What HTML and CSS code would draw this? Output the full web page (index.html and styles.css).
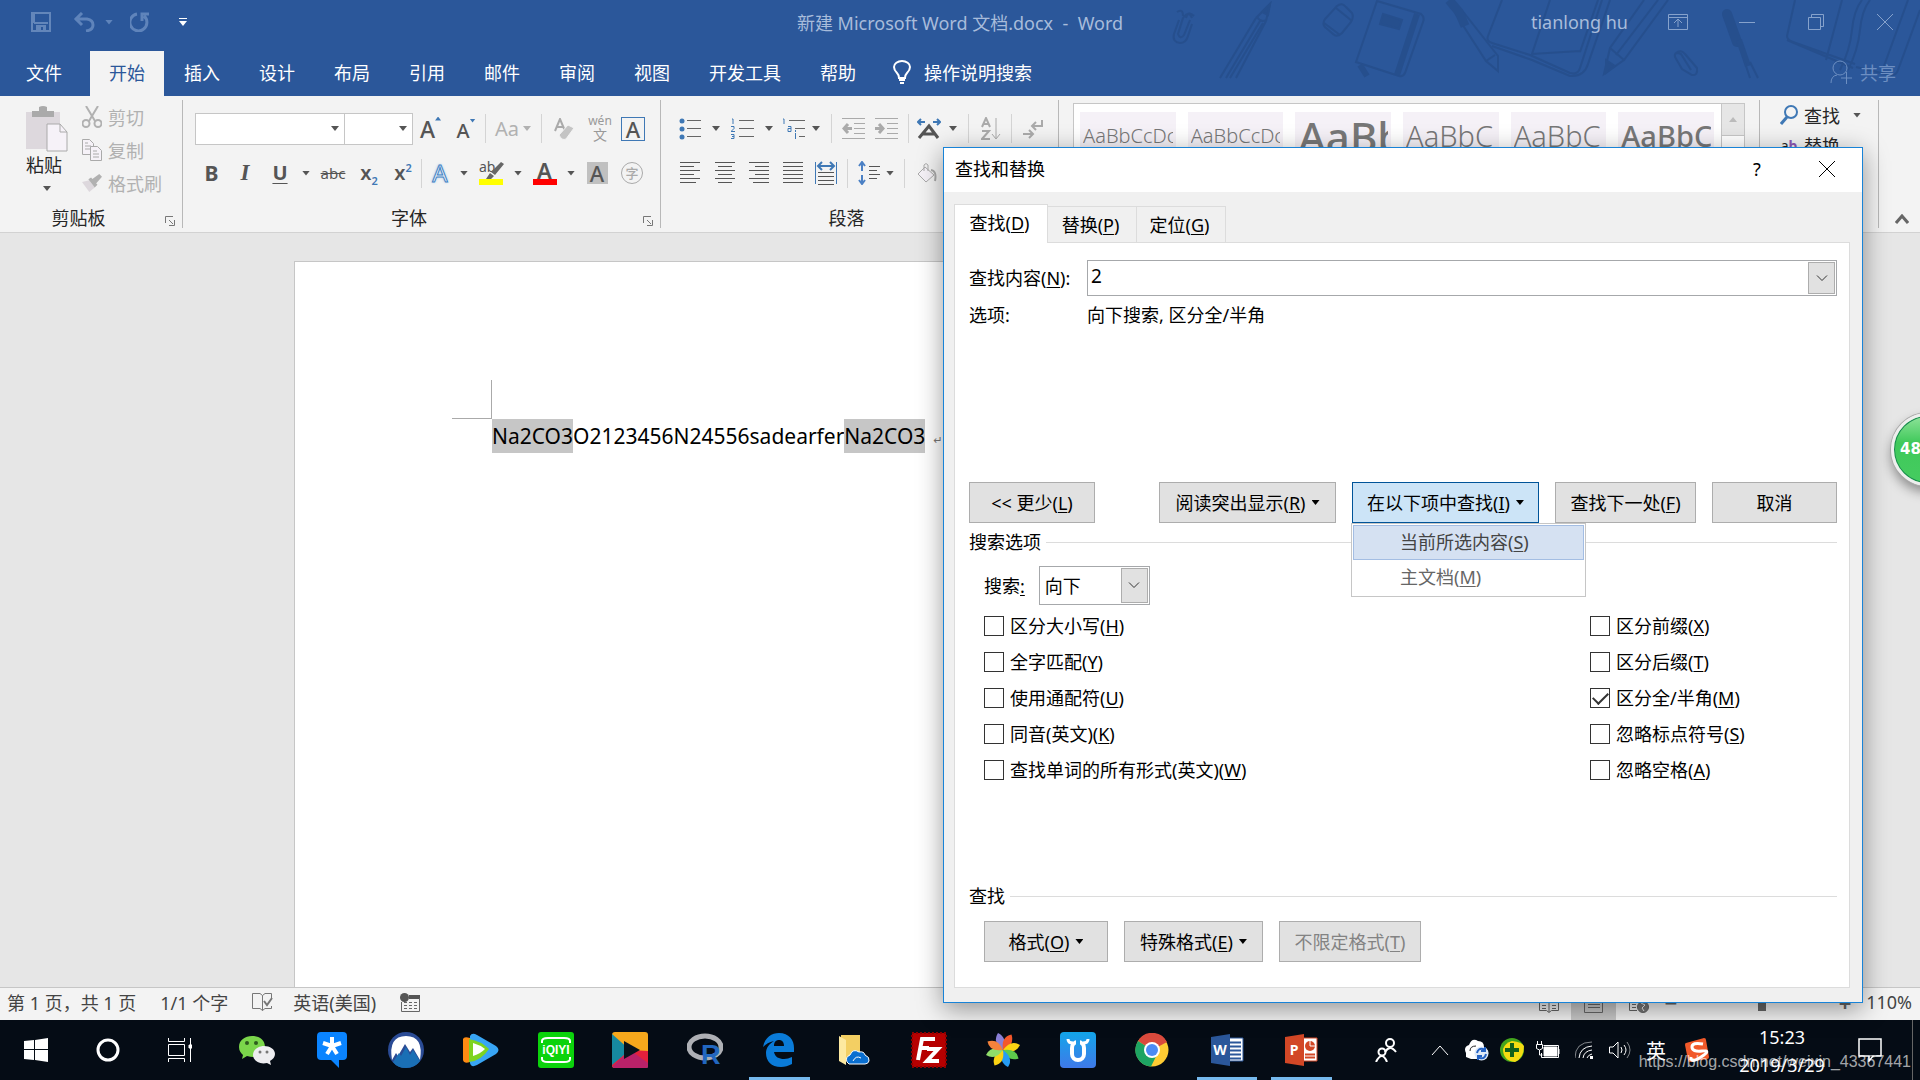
FILE: index.html
```html
<!DOCTYPE html>
<html lang="zh-CN">
<head>
    <meta charset="UTF-8">
    <meta name="viewport" content="width=device-width, initial-scale=1.0">
    <title>新建 Microsoft Word 文档.docx - Word</title>
    <link rel="stylesheet" href="styles.css">
</head>
<body>
    <header class="header">
        <svg class="doodles" width="760" height="96" viewBox="0 0 760 96" fill="none" stroke="#234a86" stroke-width="2">
            <path d="M17 12q6-4 6 4M34 16q-6-6-8 2M19 20l-5 14q-2 8 6 9 6 0 8-7l4-12M30 20l-6 15q-4 5-6-1l5-16q6-8 9 0"/>
            <path d="M60 78l36-60M66 78l34-57M70 78l33-55M76 78l30-57M96 18l14-14-4 17M97 17q4 6 9 3"/>
            <path d="M102 12l8-8-2 11z" fill="#234a86"/>
            <path d="M177 6q5-4 9 1l6 6q2 4-1 9l-9 11q-5 5-9 1l-8-7q-3-3 0-8zM176 8l16 13M164 23l16 12"/>
            <path d="M217 1l44 13q4 3 2 8l-18 51q-2 4-6 3l-43-14z"/>
            <path d="M257 14l-20 61M200 65l7 11" stroke-width="6"/>
            <path d="M223 14l19 6-3 9-19-5z" fill="#234a86"/>
            <path d="M301 9l37 47 0 15-12-10-31-48M326 61l9-6"/>
            <path d="M289 0l10 12 6 14" stroke-width="9"/>
            <path d="M342 0l-14 36q-2 5 4 7l38 12 40 18q8 2 10-5l22-68M332 46l40 14 38 16q14 1 18-12l22-64M390 0l-18 54 48-3M438 0l-18 52"/>
            <path d="M484 0l-34 48-6 26 20-14 44-60M450 48l14 12M498 0l-42 55"/>
            <path d="M446 60l0 13 9-7z" fill="#234a86"/>
            <path d="M516 53q5-4 9 1l12 14q1 8-5 7l-10-6-7-12q-1-6 6-3l10 16"/>
            <path d="M567 14l10 28" stroke-width="10" stroke-linecap="round"/>
            <path d="M579 40l9 26" stroke-width="6"/>
            <path d="M584 60l6 18M590 62l8 16"/>
            <path d="M635 0l-8 36q0 4 6 6l62 22M627 40l66 28M682 0l-16 60M710 0q-8 10-10 30t-12 40M702 0q-8 10-10 30t-12 40M760 10l-22 60q-2 6-8 5l-34-8M748 0l-24 66"/>
        </svg>
        <div class="titlebar">
            <div class="quick-access">
                <button class="icon-btn" aria-label="保存"><svg width="20" height="20" viewBox="0 0 20 20" fill="none" stroke="#6386ba" stroke-width="2"><path d="M1 1h18v18H1zM3 11h14M3 1v10"/><path d="M5 13h10v6h-3v-4h-2v4H5z" fill="#6386ba" stroke="none"/></svg></button>
                <button class="icon-btn undo" aria-label="撤消"><svg width="22" height="20" viewBox="0 0 22 20" fill="none" stroke="#5f84bb" stroke-width="3"><path d="M2 7h12q6 1 6 6t-7 6M9 1L3 7l6 6"/></svg></button>
                <i class="caret dim"></i>
                <button class="icon-btn redo" aria-label="重复"><svg width="20" height="20" viewBox="0 0 20 20" fill="none" stroke="#5f84bb" stroke-width="3"><path d="M7 2A8.500 8.500 0 1 0 14 4M12 9V2h7"/></svg></button>
                <button class="icon-btn customize" aria-label="自定义快速访问工具栏"><svg width="8" height="8" viewBox="0 0 8 8" fill="#fff"><path d="M0 0h8v1H0zM0 3h8L4 8z"/></svg></button>
            </div>
            <div class="window-title">新建 Microsoft Word 文档.docx&nbsp; -&nbsp; Word</div>
            <div class="window-controls">
                <span class="user-name">tianlong hu</span>
                <button class="win-btn" aria-label="功能区显示选项"><svg width="20" height="16" viewBox="0 0 20 16" fill="none" stroke="#86a2cc"><path d="M.5.5h19v15H.5zM.5 3.500h19M10 13V6M6 9l4-4 4 4"/></svg></button>
                <button class="win-btn" aria-label="最小化"><svg width="16" height="16" viewBox="0 0 16 16" stroke="#86a2cc"><path d="M0 8.500h16"/></svg></button>
                <button class="win-btn" aria-label="还原"><svg width="16" height="16" viewBox="0 0 16 16" fill="none" stroke="#86a2cc"><path d="M.5 3.500h12v12H.5zM3.500 3V.5h12v12H13"/></svg></button>
                <button class="win-btn" aria-label="关闭"><svg width="16" height="16" viewBox="0 0 16 16" stroke="#86a2cc"><path d="M0 0l16 16M16 0L0 16"/></svg></button>
            </div>
        </div>
        <nav class="tabs">
            <a href="#" class="tab file">文件</a>
            <a href="#" class="tab active">开始</a>
            <a href="#" class="tab">插入</a>
            <a href="#" class="tab">设计</a>
            <a href="#" class="tab">布局</a>
            <a href="#" class="tab">引用</a>
            <a href="#" class="tab">邮件</a>
            <a href="#" class="tab">审阅</a>
            <a href="#" class="tab">视图</a>
            <a href="#" class="tab">开发工具</a>
            <a href="#" class="tab">帮助</a>
            <a href="#" class="tab tell-me"><svg width="18" height="24" viewBox="0 0 18 24" fill="none" stroke="#fff" stroke-width="2"><path d="M6 18q0-3-2-5-3-3-3-6a8 6 0 0 1 16 0q0 3-3 6-2 2-2 5zM6 20h6M7 23h4"/></svg>操作说明搜索</a>
            <a href="#" class="tab share"><svg width="22" height="24" viewBox="0 0 22 24" fill="none" stroke="#6d8fc2" stroke-width="1"><ellipse cx="10" cy="8" rx="7" ry="7"/><path d="M1 23q0-7 6-8M11 18h11M16.500 12v12"/></svg>共享</a>
        </nav>
    </header>

    <section class="ribbon">
        <div class="group clipboard">
            <div class="group-body">
                <button class="paste"><svg width="42" height="46" viewBox="0 0 42 46"><path d="M0 6h34v37H0z" fill="#ddd8dd"/><path d="M6 5h7V1q4-2 8 0v4h7v6H6z" fill="#aaa"/><path d="M21 18h13l7 8v19H21z" fill="#f6f2f8" stroke="#aaa"/><path d="M34 18v8h7" fill="none" stroke="#aaa"/></svg><span>粘贴</span><i class="caret"></i></button>
                <div class="clip-actions">
                    <button><svg width="20" height="22" viewBox="0 0 20 22" fill="none" stroke="#b1b1b1" stroke-width="2"><path d="M4 0l9 15M16 0L7 15"/><circle cx="4" cy="17.500" r="3.500"/><circle cx="16" cy="17.500" r="3.500"/></svg>剪切</button>
                    <button><svg width="20" height="22" viewBox="0 0 20 22" fill="#f6f2f8" stroke="#aaa"><path d="M.5.5h7l4 4v11H.5zM3 4h3M3 7h6M3 10h6"/><path d="M8.500 7.500h7l4 4v10h-11zM11 12h4M11 15h6M11 18h6"/></svg>复制</button>
                    <button><svg width="22" height="20" viewBox="0 0 22 20"><path d="M0 9l8-2 6 8-6 5z" fill="#ddd8dd"/><path d="M7 6l3-2 7 8-3 3zM11 6l8-6 3 3-7 8z" fill="#b1b1b1"/></svg>格式刷</button>
                </div>
            </div>
            <div class="group-label"><span>剪贴板</span><svg width="10" height="10" viewBox="0 0 10 10" fill="none" stroke="#777"><path d="M.5 7V.5H8M4 4l4 4M9.500 4v5.500H4"/></svg></div>
        </div>

        <div class="group font">
            <div class="group-body">
                <div class="tool-row font-row-1">
                    <span class="combo"><input type="text" aria-label="字体"><i class="caret"></i></span>
                    <span class="combo second"><input type="text" aria-label="字号"><i class="caret"></i></span>
                    <button class="grow">A<i class="caret up"></i></button>
                    <button class="grow shrink">A<i class="caret"></i></button>
                    <i class="sep"></i>
                    <button class="case">Aa<i class="caret"></i></button>
                    <i class="sep"></i>
                    <button aria-label="清除格式"><svg width="20" height="22" viewBox="0 0 20 22" fill="none" stroke="#aaa" stroke-width="2"><path d="M1 13L6 1l5 12M3 9h6"/><path d="M5 17l9-10 6 3-8 11q-4 2-7-4z" fill="#c4c4c4" stroke="#f3f3f3" stroke-width="1"/></svg></button>
                    <button class="pinyin"><span>wén</span><span>文</span></button>
                    <button><span class="boxed">A</span></button>
                </div>
                <div class="tool-row font-row-2">
                    <button class="bold">B</button>
                    <button class="italic">I</button>
                    <button class="underline">U</button>
                    <i class="caret"></i>
                    <button class="strike">abc</button>
                    <button class="script">x<sub>2</sub></button>
                    <button class="script">x<sup>2</sup></button>
                    <i class="sep"></i>
                    <button class="effect">A</button>
                    <i class="caret"></i>
                    <button class="marker"><span>ab</span><svg width="20" height="20" viewBox="0 0 20 20" fill="#666"><path d="M17 1l3 2-9 11-4-3zM6 12l4 3-3 3H2z"/></svg></button>
                    <i class="caret"></i>
                    <button class="color">A</button>
                    <i class="caret"></i>
                    <button><span class="shaded">A</span></button>
                    <button><span class="circled">字</span></button>
                </div>
            </div>
            <div class="group-label"><span>字体</span><svg width="10" height="10" viewBox="0 0 10 10" fill="none" stroke="#777"><path d="M.5 7V.5H8M4 4l4 4M9.500 4v5.500H4"/></svg></div>
        </div>

        <div class="group paragraph">
            <div class="group-body">
                <div class="tool-row para-row-1">
                    <button aria-label="项目符号"><svg width="22" height="22" viewBox="0 0 22 22" stroke="#666"><path d="M8 2.500h14M8 10.500h14M8 18.500h14"/><g fill="#3f78b5" stroke="none"><circle cx="3" cy="3" r="2.500"/><circle cx="3" cy="11" r="2.500"/><circle cx="3" cy="19" r="2.500"/></g></svg></button>
                    <i class="caret"></i>
                    <button aria-label="编号"><svg width="23" height="22" viewBox="0 0 23 22" fill="none" stroke="#666"><path d="M8 2.500h15M8 10.500h15M8 18.500h15"/><path d="M1 1h1v5M0 8.500h3v2l-3 3h4M0 16.500h3v4H0M1 18.500h2" stroke="#3f78b5"/></svg></button>
                    <i class="caret"></i>
                    <button aria-label="多级列表"><svg width="24" height="22" viewBox="0 0 24 22" fill="none" stroke="#666"><path d="M7 2.500h16M13 10.500h10M17 18.500h6"/><path d="M1 1h1v5M6 8.500h3v5H6v-3h3M13.500 15v6M13.500 12v2" stroke="#3f78b5"/></svg></button>
                    <i class="caret"></i>
                    <i class="sep"></i>
                    <button aria-label="减少缩进量"><svg width="23" height="22" viewBox="0 0 23 22" fill="none" stroke="#aaa"><path d="M0 .5h23M12 5.500h11M12 10.500h11M12 15.500h11M0 20.500h23"/><path d="M10 10.500H2M6 6l-4 4.500L6 15" stroke-width="3"/></svg></button>
                    <button aria-label="增加缩进量"><svg width="23" height="22" viewBox="0 0 23 22" fill="none" stroke="#aaa"><path d="M0 .5h23M12 5.500h11M12 10.500h11M12 15.500h11M0 20.500h23"/><path d="M0 10.500h8M4 6l4 4.500L4 15" stroke-width="3"/></svg></button>
                    <i class="sep"></i>
                    <button aria-label="中文版式"><svg width="24" height="22" viewBox="0 0 24 22" fill="none" stroke="#3f78b5" stroke-width="2"><path d="M1 4h7M4 1L1 4l3 3M23 4h-7M20 1l3 3-3 3"/><path d="M2 20L12 8l9 12M6 16h12" stroke="#555" stroke-width="3"/></svg></button>
                    <i class="caret"></i>
                    <i class="sep"></i>
                    <button aria-label="排序"><svg width="20" height="24" viewBox="0 0 20 24" fill="none" stroke="#aaa" stroke-width="2"><path d="M1 10L5 1l4 9M2 7h6M1 14h7l-7 8h8"/><path d="M15 1v20M11 17l4 5 4-5" stroke-width="1"/></svg></button>
                    <i class="sep"></i>
                    <button aria-label="显示编辑标记"><svg width="20" height="20" viewBox="0 0 20 20" fill="none" stroke="#aaa" stroke-width="2"><path d="M19 1v6h-9M13 3L9 7l4 4M0 15h9M6 11l4 4-4 4"/></svg></button>
                </div>
                <div class="tool-row para-row-2">
                    <button aria-label="左对齐"><svg width="20" height="22" viewBox="0 0 20 22" stroke="#555"><path d="M0 .5h20M0 4.500h14M0 8.500h20M0 12.500h14M0 16.500h20M0 20.500h16"/></svg></button>
                    <button aria-label="居中"><svg width="20" height="22" viewBox="0 0 20 22" stroke="#555"><path d="M0 .5h20M3 4.500h14M0 8.500h20M3 12.500h14M0 16.500h20M3 20.500h14"/></svg></button>
                    <button aria-label="右对齐"><svg width="20" height="22" viewBox="0 0 20 22" stroke="#555"><path d="M0 .5h20M6 4.500h14M0 8.500h20M6 12.500h14M0 16.500h20M4 20.500h16"/></svg></button>
                    <button aria-label="两端对齐"><svg width="20" height="22" viewBox="0 0 20 22" stroke="#555"><path d="M0 .5h20M0 4.500h20M0 8.500h20M0 12.500h20M0 16.500h20M0 20.500h20"/></svg></button>
                    <button aria-label="分散对齐"><svg width="22" height="24" viewBox="0 0 22 24" fill="none" stroke="#555"><path d="M3 11.500h16M3 15.500h16M3 19.500h16M3 23.500h16"/><path d="M.5 1v22M21.500 1v22" stroke="#3f78b5"/><path d="M4 5h14M7 1L3 5l4 4M15 1l4 4-4 4" stroke="#3f78b5" stroke-width="2"/></svg></button>
                    <i class="sep"></i>
                    <button aria-label="行距"><svg width="22" height="24" viewBox="0 0 22 24" fill="none" stroke="#555"><path d="M11 5.500h11M11 9.500h8M11 13.500h11M11 17.500h8"/><path d="M4 2v8M1 5l3-4 3 4M4 14v8M1 19l3 4 3-4" stroke="#4b80c4" stroke-width="2"/></svg></button>
                    <i class="caret"></i>
                    <i class="sep"></i>
                    <button aria-label="底纹"><svg width="20" height="20" viewBox="0 0 20 20" fill="#f6f2f8" stroke="#aaa"><path d="M8 4l9 8-8 7-8-8z"/><path d="M7 8V2q2-3 4 0v6" fill="none"/><path d="M14 7q6 1 4 11" fill="none" stroke-width="2"/></svg></button>
                </div>
            </div>
            <div class="group-label"><span>段落</span><svg width="10" height="10" viewBox="0 0 10 10" fill="none" stroke="#777"><path d="M.5 7V.5H8M4 4l4 4M9.500 4v5.500H4"/></svg></div>
        </div>

        <div class="group styles">
            <div class="gallery">
                <button class="style-item small">AaBbCcDc</button>
                <button class="style-item small">AaBbCcDc</button>
                <button class="style-item title">AaBb</button>
                <button class="style-item">AaBbC</button>
                <button class="style-item">AaBbC</button>
                <button class="style-item strong">AaBbC</button>
                <div class="gallery-scroll"><button aria-label="上一行"><i class="caret up"></i></button></div>
            </div>
        </div>

        <div class="group editing">
            <button><svg width="18" height="20" viewBox="0 0 18 20" fill="none" stroke="#3f78b5" stroke-width="2"><ellipse cx="11" cy="7" rx="6" ry="6"/><path d="M7 12l-6 7" stroke-width="3"/></svg>查找<i class="caret"></i></button>
            <button><span class="ab">a<b>b</b></span>替换</button>
        </div>
        <button class="collapse" aria-label="折叠功能区"><svg width="14" height="10" viewBox="0 0 14 10" fill="none" stroke="#666" stroke-width="3"><path d="M1 9l6-7 6 7"/></svg></button>
    </section>

    <main class="workspace">
        <article class="page">
            <div class="margin-corner"></div>
            <p><mark>Na2CO3</mark>O2123456N24556sadearfer<mark>Na2CO3</mark><span class="pilcrow">↵</span></p>
        </article>
    </main>

    <footer class="statusbar">
        <span>第 1 页，共 1 页</span>
        <span>1/1 个字</span>
        <svg width="21" height="18" viewBox="0 0 21 18" fill="none" stroke="#777"><path d="M10.500 2.500L8 .5H.5v15H8l2.500 2 2.500-2h6.500V13M10.500 2.500v15M10.500 2.500l2.500-2h6.500v5"/><path d="M12 8l3 4 5-7" stroke-width="2"/></svg>
        <span>英语(美国)</span>
        <svg class="macro" width="20" height="19" viewBox="0 0 20 19"><path d="M9 2h11v4H9z" fill="#555"/><path d="M1.500 9v9.500h18V5" fill="none" stroke="#666"/><path d="M4 9.500h13M4 12.500h13M4 15.500h13" stroke="#666" stroke-dasharray="3 2"/><circle cx="4.500" cy="4.500" r="4.500" fill="#555"/></svg>
        <div class="view-tools">
            <button aria-label="阅读视图"><svg width="20" height="18" viewBox="0 0 20 18" fill="none" stroke="#666"><path d="M.5 2.500h7l2.500 2 2.500-2h7v13h-7l-2.500 2-2.500-2h-7zM10 4v13M3 7.500h4M3 10.500h4M3 13.500h4M13 7.500h4M13 10.500h4M13 13.500h4"/></svg></button>
            <button class="on" aria-label="页面视图"><svg width="19" height="18" viewBox="0 0 19 18" fill="none" stroke="#666"><path d="M.5.5h18v17H.5zM4 6.500h12M4 9.500h12M4 12.500h12"/></svg></button>
            <button aria-label="Web 版式视图"><svg width="20" height="20" viewBox="0 0 20 20" fill="none" stroke="#666"><path d="M8 16.500H.5v-14h16V6M3 7.500h7M3 10.500h4M3 13.500h4"/><circle cx="14" cy="13" r="5.500" fill="#777"/><path d="M12 9l4 2-3 3 2 3" stroke="#f3f3f3"/></svg></button>
            <span class="zoom-sign">−</span>
            <input class="zoom-range" type="range" min="10" max="200" value="110" aria-label="缩放">
            <span class="zoom-sign">+</span>
            <span class="zoom-value">110%</span>
        </div>
    </footer>

    <nav class="taskbar">
        <div class="system">
            <a href="#" aria-label="开始"><svg width="24" height="24" viewBox="0 0 24 24" fill="#fff"><path d="M0 3l10-1v9H0zM11 2l13-2v11H11zM0 12h10v10L0 21zM11 12h13v12l-13-2z"/></svg></a>
            <a href="#" aria-label="Cortana"><svg width="24" height="24" viewBox="0 0 24 24" fill="none" stroke="#fff" stroke-width="3"><circle cx="12" cy="12" r="10"/></svg></a>
            <a href="#" aria-label="任务视图"><svg width="24" height="24" viewBox="0 0 24 24" fill="none" stroke="#fff" stroke-width="1"><path d="M.5 0v3.500h16V0M.5 24v-3.500h16V24M.5 6.500h16v11H.5zM22.500 0v24"/><path d="M21 7h3v3h-3z" fill="#fff"/></svg></a>
        </div>
        <div class="apps">
            <a href="#" aria-label="微信"><svg width="36" height="36" viewBox="0 0 36 36"><path d="M13 4c-7 0-13 4-13 11 0 4 2 6 4 8l-1 4 5-3c11 3 18-2 18-9S20 4 13 4z" fill="#7bd64b"/><path d="M25 14c-6 0-11 4-11 9s6 10 14 8l4 2-1-4c3-2 5-4 5-7 0-5-5-8-11-8z" fill="#ededf0"/><g fill="#2d5c1e"><circle cx="8" cy="11" r="2"/><circle cx="17" cy="11" r="2"/></g><g fill="#777"><circle cx="21" cy="20" r="1.500"/><circle cx="28" cy="20" r="1.500"/></g></svg></a>
            <a href="#" aria-label="滴答"><svg width="30" height="36" viewBox="0 0 30 36"><path d="M4 0h22q4 0 4 4v20q0 4-4 4h-4v8l-8-8H4q-4 0-4-4V4q0-4 4-4z" fill="#0a84ff"/><path d="M15 14V5M15 14l-9-3M15 14l9-3M15 14l-5 8M15 14l5 8" stroke="#fff" stroke-width="4"/></svg></a>
            <a href="#" aria-label="NordVPN"><svg width="36" height="36" viewBox="0 0 36 36"><circle cx="18" cy="18" r="18" fill="#2a4b95"/><path d="M4 28Q0 4 18 4t14 24l-7-12-3 4-5-8-7 12-2-3z" fill="#fff"/><path d="M5 30l6-9 2 3 5-9 4 8 3-5 7 11q-5 7-14 7T5 30z" fill="#1a6fb5"/></svg></a>
            <a href="#" aria-label="腾讯视频"><svg width="36" height="36" viewBox="0 0 36 36"><path d="M7 4q2-4 7-1l19 11q5 4 0 8L14 33q-6 3-7-2z" fill="#38a5f4"/><path d="M0 7q1-3 7-1v24q-6 2-7-2z" fill="#ff8b12"/><path d="M6 7q12 2 20 10-8 12-20 13z" fill="#7ed321"/><path d="M10 11q7 2 12 6-5 5-12 7z" fill="#fff"/></svg></a>
            <a href="#" aria-label="爱奇艺"><svg width="36" height="36" viewBox="0 0 36 36"><rect width="36" height="36" rx="3" fill="#0bd30b"/><path d="M4 11V9q0-3 6-3h16q6 0 6 3v2M4 25v2q0 3 6 3h16q6 0 6-3v-2" fill="none" stroke="#fff" stroke-width="2"/><text x="18" y="22" text-anchor="middle" class="logo-iqiyi">iQIYI</text></svg></a>
            <a href="#" aria-label="视频播放器"><svg width="36" height="36" viewBox="0 0 36 36"><rect width="36" height="36" rx="3" fill="#f6a81c"/><path d="M0 2v32l18-16z" fill="#1689a0"/><path d="M0 33q0 3 3 3h30q3 0 3-3V19L18 18z" fill="#e3203c"/><path d="M0 35l18-17 18 13v5H2z" fill="#a7247c" opacity=".7"/><path d="M12 9l16 9-16 9z" fill="#07131c"/></svg></a>
            <a href="#" aria-label="R"><svg width="36" height="34" viewBox="0 0 36 34"><ellipse cx="18" cy="14" rx="16" ry="11" fill="none" stroke="#aeb0b5" stroke-width="5"/><text x="14" y="31" class="logo-r">R</text></svg></a>
            <a href="#" class="running" aria-label="Edge"><svg width="32" height="34" viewBox="0 0 32 34"><path d="M0 14C2 4 9 0 16 0c10 0 15 7 15 15v4H11c1 5 5 7 10 7 3 0 5-1 8-2v7c-4 2-7 3-11 3C8 34 3 28 3 20c0-5 3-9 8-12-5 1-8 3-11 6zm11-1h10c0-4-2-6-5-6s-5 2-5 6z" fill="#0a7bd8"/></svg></a>
            <a href="#" aria-label="OneDrive"><svg width="32" height="34" viewBox="0 0 32 34"><path d="M3 2h19v25H3z" fill="#f3cf63"/><path d="M1 3l7 4v25l-7-4z" fill="#fde9a0"/><path d="M9 29q-2-5 3-7 3-7 9-3 5-1 6 3 5 2 4 6-1 3-4 3H11z" fill="#0a6fd0" stroke="#fff"/><path d="M15 28q3-6 8-3" stroke="#fff" fill="none"/></svg></a>
            <a href="#" aria-label="FileZilla"><svg width="36" height="36" viewBox="0 0 36 36"><rect x="1" y="1" width="34" height="34" fill="#b60000" stroke="#8b0000" stroke-width="2" stroke-dasharray="2 2"/><path d="M7 28L11 7h13M9 16h9M16 17h11L16 29h12" fill="none" stroke="#fff" stroke-width="4"/></svg></a>
            <a href="#" aria-label="美图看看"><svg width="34" height="34" viewBox="0 0 34 34"><g transform="translate(17 17)"><path d="M0 0q-11-8-5-17 10 5 5 17z" fill="#8a7fd6"/><path d="M0 0q-11-8-5-17 10 5 5 17z" fill="#f4572b" transform="rotate(45)"/><path d="M0 0q-11-8-5-17 10 5 5 17z" fill="#fbd313" transform="rotate(90)"/><path d="M0 0q-11-8-5-17 10 5 5 17z" fill="#5dcb4c" transform="rotate(135)"/><path d="M0 0q-11-8-5-17 10 5 5 17z" fill="#269cf2" transform="rotate(180)"/><path d="M0 0q-11-8-5-17 10 5 5 17z" fill="#fbd313" transform="rotate(225)"/><path d="M0 0q-11-8-5-17 10 5 5 17z" fill="#8fdc6a" transform="rotate(270)"/><path d="M0 0q-11-8-5-17 10 5 5 17z" fill="#f4823b" transform="rotate(315)"/></g></svg></a>
            <a href="#" aria-label="U"><svg width="36" height="36" viewBox="0 0 36 36"><defs><linearGradient id="u-bg" x1="0" y1="0" x2="0" y2="1"><stop offset="0" stop-color="#13a6ea"/><stop offset="1" stop-color="#3f79e8"/></linearGradient></defs><rect width="36" height="36" rx="4" fill="url(#u-bg)"/><path d="M8 7q0 4 5 4M28 7q0 4-5 4" fill="none" stroke="#fff" stroke-width="3"/><rect x="12" y="10" width="12" height="18" rx="6" fill="none" stroke="#fff" stroke-width="4"/><path d="M16 7h4v7h-4z" fill="#1e9aea"/></svg></a>
            <a href="#" aria-label="Chrome"><svg width="34" height="34" viewBox="0 0 34 34"><circle cx="17" cy="17" r="16.500" fill="#fc3"/><path d="M17 17L3 8A16.500 16.500 0 0 1 32 9z" fill="#da4a3d"/><path d="M17 17L3 8a16.500 16.500 0 0 0 13 25.500l5-10z" fill="#1da462"/><circle cx="17" cy="17" r="8" fill="#fff"/><circle cx="17" cy="17" r="6" fill="#4c8bf5"/></svg></a>
            <a href="#" class="running" aria-label="Word"><svg width="33" height="32" viewBox="0 0 33 32"><path d="M16 4h16v23H16z" fill="#fff" stroke="#2b579a"/><path d="M19 8.500h11M19 12.500h11M19 16.500h11M19 20.500h11M19 24.500h11" stroke="#2b579a" stroke-width="2"/><path d="M0 3l19-3v32L0 29z" fill="#2b579a"/><text x="9" y="21" text-anchor="middle" class="logo-office">W</text></svg></a>
            <a href="#" class="running" aria-label="PowerPoint"><svg width="33" height="32" viewBox="0 0 33 32"><path d="M16 4h16v23H16z" fill="#fff" stroke="#d24726"/><circle cx="25" cy="12" r="5" fill="#d24726"/><path d="M25 12V7M25 12h5" stroke="#fff"/><path d="M20 20.500h10M20 23.500h10" stroke="#d24726" stroke-width="2"/><path d="M0 3l19-3v32L0 29z" fill="#d24726"/><text x="9" y="21" text-anchor="middle" class="logo-office">P</text></svg></a>
        </div>
        <div class="tray">
            <a href="#" class="people" aria-label="人脉"><svg width="22" height="24" viewBox="0 0 22 24" fill="none" stroke="#fff" stroke-width="2"><circle cx="15" cy="5" r="4"/><path d="M10 14q5-8 11 0"/><circle cx="7" cy="14" r="3.500"/><path d="M1 24q6-12 11 0"/></svg></a>
            <a href="#" aria-label="显示隐藏的图标"><svg width="18" height="11" viewBox="0 0 18 11" fill="none" stroke="#fff" stroke-width="1"><path d="M1 10l8-9 8 9"/></svg></a>
            <a href="#" aria-label="云同步"><svg width="25" height="22" viewBox="0 0 25 22"><path d="M2 14q-3-6 3-8 3-8 9-4 6 0 6 6 5 3 4 7l-4 5H7l-5-2z" fill="#fff"/><path d="M6 12q0-5 6-5" fill="none" stroke="#222"/><circle cx="17.500" cy="14.500" r="7" fill="#dfeaf8"/><path d="M13 14q1-5 6-4l2 1M22 15q-1 5-6 4l-2-1M21 8v4h-4M14 21v-4h4" fill="none" stroke="#2463c4" stroke-width="2"/></svg></a>
            <a href="#" aria-label="安全卫士"><svg width="24" height="24" viewBox="0 0 24 24"><circle cx="12" cy="12" r="12" fill="#43a51d"/><path d="M24 8q-2-4-12-5-7 2-9 8 0 12 12 13 9-4 9-16z" fill="#f4dc12"/><path d="M12 5v14M5 12h14" stroke="#14611b" stroke-width="4"/></svg></a>
            <a href="#" aria-label="电池"><svg width="24" height="18" viewBox="0 0 24 18" fill="none" stroke="#fff"><path d="M7.500 4.500h15v12h-17V12"/><path d="M8 6h13v9H8z" fill="#fff"/><path d="M1.500 0v3M5.500 0v3M.5 3.500h6v4q-3 3-6 0zM3.500 9v5h3" /><path d="M23 8v5"/></svg></a>
            <a href="#" aria-label="网络"><svg width="18" height="18" viewBox="0 0 18 18" fill="none" stroke="#fff"><path d="M0 17Q0 1 17 1" opacity=".5"/><path d="M4 17Q5 6 17 5M8 17q1-7 9-8M12 17q1-3 5-4"/><path d="M15 15h3v3h-3z" fill="#fff" stroke="none"/></svg></a>
            <a href="#" aria-label="音量"><svg width="22" height="18" viewBox="0 0 22 18" fill="none" stroke="#fff"><path d="M.5 6v6H4l5 5V1L4 6zM12 6q2 3 0 6M15 4q4 5 0 10"/><path d="M18 1q6 8 0 16" opacity=".5"/></svg></a>
            <a href="#" class="ime">英</a>
            <a href="#" class="sogou" aria-label="搜狗输入法"><svg width="24" height="24" viewBox="0 0 24 24"><path d="M1 5l18-5q2 0 2 2l3 17q0 2-2 2L5 24q-2 0-2-2L0 7q0-2 1-2z" fill="#f1592a"/><path d="M18 6Q7 4 7 9t10 4-1 6-10 0" fill="none" stroke="#fff" stroke-width="3"/></svg></a>
            <a href="#" class="clock"><span>15:23</span><span>2019/3/29</span></a>
            <a href="#" class="notify" aria-label="通知"><svg width="24" height="24" viewBox="0 0 24 24" fill="none" stroke="#fff" stroke-width="1.500"><path d="M1 1h22v17h-8l-4 5v-5H1z"/></svg></a>
            <a href="#" class="peek" aria-label="显示桌面"></a>
        </div>
        <div class="watermark">https://blog.csdn.net/weixin_43367441</div>
    </nav>

    <div class="speed-ball">48</div>

    <section class="dialog" role="dialog" aria-labelledby="dialog-title">
        <div class="dialog-title">
            <h1 id="dialog-title">查找和替换</h1>
            <button class="help" aria-label="帮助">?</button>
            <button class="close" aria-label="关闭"><svg width="16" height="16" viewBox="0 0 16 16" stroke="#000"><path d="M0 0l16 16M16 0L0 16"/></svg></button>
        </div>
        <div class="dialog-body">
            <div class="dialog-tabs">
                <button class="active">查找(<u>D</u>)</button>
                <button>替换(<u>P</u>)</button>
                <button>定位(<u>G</u>)</button>
            </div>
            <form class="panel">
                <div class="field">
                    <label for="find-text">查找内容(<u>N</u>):</label>
                    <div class="find-box">
                        <input id="find-text" type="text" value="2">
                        <button type="button" aria-label="历史记录"><svg width="12" height="7" viewBox="0 0 12 7" fill="none" stroke="#333"><path d="M1 .5l5 5 5-5"/></svg></button>
                    </div>
                </div>
                <div class="field options">
                    <span class="field-name">选项:</span>
                    <span>向下搜索, 区分全/半角</span>
                </div>

                <div class="actions">
                    <button type="button" class="less">&lt;&lt; 更少(<u>L</u>)</button>
                    <button type="button" class="reading">阅读突出显示(<u>R</u>)<i class="caret"></i></button>
                    <div class="find-in">
                        <button type="button" class="pressed">在以下项中查找(<u>I</u>)<i class="caret"></i></button>
                        <div class="menu">
                            <button type="button" class="hover">当前所选内容(<u>S</u>)</button>
                            <button type="button">主文档(<u>M</u>)</button>
                        </div>
                    </div>
                    <button type="button" class="next">查找下一处(<u>F</u>)</button>
                    <button type="button" class="cancel">取消</button>
                </div>

                <h2>搜索选项</h2>
                <div class="direction">
                    <label for="direction">搜索<u>:</u></label>
                    <div class="select-box">
                        <select id="direction"><option>向下</option></select>
                        <span><svg width="12" height="7" viewBox="0 0 12 7" fill="none" stroke="#333"><path d="M1 .5l5 5 5-5"/></svg></span>
                    </div>
                </div>
                <div class="checks">
                    <label><input type="checkbox">区分大小写(<u>H</u>)</label>
                    <label><input type="checkbox">区分前缀(<u>X</u>)</label>
                    <label><input type="checkbox">全字匹配(<u>Y</u>)</label>
                    <label><input type="checkbox">区分后缀(<u>T</u>)</label>
                    <label><input type="checkbox">使用通配符(<u>U</u>)</label>
                    <label><input type="checkbox" checked>区分全/半角(<u>M</u>)</label>
                    <label><input type="checkbox">同音(英文)(<u>K</u>)</label>
                    <label><input type="checkbox">忽略标点符号(<u>S</u>)</label>
                    <label><input type="checkbox">查找单词的所有形式(英文)(<u>W</u>)</label>
                    <label><input type="checkbox">忽略空格(<u>A</u>)</label>
                </div>

                <h2 class="find-heading">查找</h2>
                <div class="format-row">
                    <button type="button" class="format">格式(<u>O</u>)<i class="caret"></i></button>
                    <button type="button" class="special">特殊格式(<u>E</u>)<i class="caret"></i></button>
                    <button type="button" class="no-format" disabled>不限定格式(<u>T</u>)</button>
                </div>
            </form>
        </div>
    </section>
</body>
</html>
```
FILE: styles.css
```css
* {
    box-sizing: border-box;
}
body, html {
    margin: 0;
    padding: 0;
    height: 100%;
    overflow: hidden;
}
body {
    display: flex;
    flex-direction: column;
    position: relative;
    font-family: "Noto Sans", "Noto Sans CJK SC", sans-serif;
    font-size: 18px;
    color: #262626;
    background: #e6e6e6;
}
button, input, select {
    font: inherit;
    color: inherit;
    padding: 0;
    margin: 0;
    border: none;
    background: none;
    border-radius: 0;
    outline: none;
}
a {
    color: inherit;
    text-decoration: none;
}
svg {
    display: block;
    flex: none;
}
u {
    text-underline-offset: 2px;
    text-decoration-thickness: 1px;
}
.caret {
    flex: none;
    width: 8px;
    height: 5px;
    background: #555;
    clip-path: polygon(0 0, 100% 0, 50% 100%);
}
.caret.dim {
    background: #5f84bb;
}
.caret.up {
    background: #bbb;
    clip-path: polygon(50% 0, 100% 100%, 0 100%);
}

/* title bar and tabs */
.header {
    position: relative;
    background: #2b579a;
    color: #fff;
}
.doodles {
    position: absolute;
    top: 0;
    right: 0;
    opacity: 0.6;
}
.titlebar {
    position: relative;
    display: grid;
    grid-template-columns: 1fr auto 1fr;
    align-items: center;
    height: 51px;
    padding-bottom: 7px;
}
.quick-access {
    display: flex;
    align-items: center;
    padding-left: 31px;
}
.undo {
    margin: 0 10px 0 22px;
}
.redo {
    margin: 0 29px 0 17px;
}
.window-title, .user-name {
    color: #a8bcdb;
}
.window-controls {
    display: flex;
    align-items: center;
    justify-content: flex-end;
    padding-right: 1px;
}
.user-name {
    margin-right: 15px;
}
.win-btn {
    display: flex;
    justify-content: center;
    width: 69px;
}
.tabs {
    position: relative;
    display: flex;
    gap: 1px;
}
.tab {
    display: flex;
    align-items: center;
    height: 45px;
    padding: 0 19px 4px;
}
.tab.file {
    padding: 0 27px 4px 26px;
}
.tab.active {
    background: #f3f3f3;
    color: #2b579a;
}
.tell-me {
    gap: 13px;
    padding-left: 17px;
}
.share {
    gap: 8px;
    margin-left: auto;
    padding-right: 24px;
    color: #6d8fc2;
}

/* ribbon */
.ribbon {
    display: flex;
    height: 137px;
    background: #f3f3f3;
    border-bottom: 1px solid #d2d2d2;
    padding: 4px 0;
}
.group {
    flex: none;
    display: flex;
    flex-direction: column;
    border-right: 1px solid #b8b8b8;
}
.group-body {
    flex: 1;
}
.group-label {
    display: flex;
    align-items: center;
    height: 26px;
    margin-bottom: -3px;
    padding-right: 7px;
    line-height: 24px;
}
.group-label span {
    flex: 1;
    text-align: center;
    padding-right: 20px;
}
.group-label svg {
    margin-top: 6px;
}
.clipboard {
    width: 183px;
}
.clipboard .group-label span {
    padding-right: 8px;
}
.clipboard .group-body {
    display: flex;
    padding: 6px 0 0 26px;
}
.paste {
    display: flex;
    flex-direction: column;
    align-items: center;
    align-self: flex-start;
    width: 42px;
    line-height: 26px;
}
.paste span {
    align-self: flex-start;
    margin-bottom: 8px;
    white-space: nowrap;
}
.clip-actions {
    margin-left: 14px;
    margin-top: -6px;
}
.clip-actions button {
    display: flex;
    align-items: center;
    gap: 6px;
    height: 33px;
    color: #b1b1b1;
}
.clip-actions svg {
    width: 20px;
}
.font {
    width: 478px;
    padding-left: 12px;
}
.tool-row {
    display: grid;
    align-items: center;
    justify-items: center;
    height: 45px;
    line-height: 24px;
    color: #555;
}
.font-row-1 {
    grid-template-columns: 150px 68px 35px 36px 2px 54px 2px 44px 28px 38px;
    height: 33px;
    margin-top: 12px;
}
.font-row-2 {
    grid-template-columns: 33px 34px 36px 16px 38px 34px 34px 2px 36px 12px 42px 12px 41px 12px 40px 30px;
    height: 46px;
    margin-top: 5px;
}
.sep {
    width: 1px;
    height: 29px;
    background: #d4d4d4;
}
.combo {
    display: flex;
    align-items: center;
    width: 100%;
    height: 32px;
    padding-right: 5px;
    background: #fff;
    border: 1px solid #c6c6c6;
}
.combo.second {
    border-left: none;
}
.combo input {
    flex: 1;
    width: 20px;
    min-width: 0;
}
.grow {
    display: flex;
    font-size: 23px;
    font-weight: 500;
}
.shrink {
    font-size: 20px;
    padding-top: 4px;
}
.grow .caret {
    width: 6px;
    height: 4px;
    background: #3f78b5;
}
.case {
    display: flex;
    align-items: center;
    gap: 4px;
    font-size: 20px;
    color: #b1b1b1;
}
.case .caret {
    background: #b1b1b1;
}
.pinyin {
    font-size: 12px;
    line-height: 12px;
    color: #999;
}
.pinyin span {
    display: block;
}
.pinyin span + span {
    font-size: 14px;
    line-height: 15px;
}
.boxed, .shaded, .circled {
    display: block;
    width: 24px;
    height: 24px;
    line-height: 22px;
    font-size: 22px;
    font-weight: 500;
    text-align: center;
    border: 1px solid #3f78b5;
}
.shaded {
    width: 21px;
    height: 22px;
    border: none;
    background: #c0c0c0;
}
.circled {
    width: 22px;
    height: 22px;
    border: 1px solid #aaa;
    border-radius: 50%;
    font-size: 13px;
    line-height: 20px;
    color: #aaa;
}
.bold {
    font-weight: bold;
    font-size: 21px;
}
.italic {
    font-family: "Liberation Serif", serif;
    font-style: italic;
    font-weight: bold;
    font-size: 23px;
}
.underline {
    font-weight: bold;
    font-size: 20px;
    text-decoration: underline;
    text-underline-offset: 3px;
    text-decoration-thickness: 1px;
}
.strike {
    font-size: 15px;
    text-decoration: line-through;
}
.script {
    font-size: 20px;
    font-weight: 600;
    white-space: nowrap;
}
.script sub, .script sup {
    font-size: 11px;
    line-height: 8px;
    color: #3f78b5;
}
.effect {
    font-size: 24px;
    color: #f3f3f3;
    -webkit-text-stroke: 1px #3f82c6;
    text-shadow: 0 0 3px #7fb2e5;
}
.marker {
    display: flex;
    width: 24px;
    height: 24px;
    border-bottom: 6px solid #ff0;
    font-size: 14px;
    line-height: 12px;
}
.marker svg {
    margin-left: -11px;
}
.color {
    width: 24px;
    height: 24px;
    border-bottom: 6px solid #f00;
    font-size: 22px;
    font-weight: 600;
    line-height: 16px;
}
.paragraph {
    width: 398px;
    padding-left: 11px;
}
.para-row-1 {
    grid-template-columns: 36px 16px 37px 16px 33px 12px 18px 26px 41px 2px 39px 10px 20px 25px 16px 28px;
    justify-content: start;
    height: 33px;
    margin-top: 12px;
}
.para-row-2 {
    grid-template-columns: 36px 34px 34px 34px 32px 10px 34px 8px 20px 26px;
    justify-content: start;
    height: 46px;
    margin-top: 5px;
}
.styles {
    flex: 1;
    min-width: 0;
    padding: 3px 14px 0;
}
.gallery {
    display: flex;
    gap: 12px;
    height: 96px;
    padding-left: 6px;
    background: #fff;
    border: 1px solid #c6c6c6;
}
.style-item {
    flex: 1;
    min-width: 0;
    height: 74px;
    margin-top: 8px;
    padding: 0;
    border: solid #f5f1f7;
    border-width: 0 3px;
    overflow: hidden;
    background: #f5f1f7;
    color: #777;
    font-size: 29px;
    font-weight: 300;
    line-height: 48px;
    text-align: left;
    display: flex;
}
.style-item.small {
    font-size: 20px;
}
.style-item.title {
    font-size: 42px;
    font-weight: 500;
    line-height: 50px;
}
.style-item.strong {
    font-weight: 500;
}
.gallery-scroll {
    flex: none;
    width: 23px;
    margin-left: -5px;
    border-left: 1px solid #c6c6c6;
}
.gallery-scroll button {
    display: flex;
    align-items: center;
    justify-content: center;
    width: 100%;
    height: 32px;
    background: #e6e6e6;
    border-bottom: 1px solid #c6c6c6;
}
.editing {
    width: 119px;
    padding-left: 20px;
}
.editing button {
    display: flex;
    align-items: center;
    gap: 6px;
    height: 30px;
}
.editing .caret {
    margin-left: 7px;
}
.ab {
    width: 18px;
    font-size: 14px;
}
.ab b {
    color: #8e57b5;
}
.collapse {
    flex: none;
    display: flex;
    align-items: flex-end;
    width: 41px;
    padding: 0 0 4px 16px;
}

/* document */
.workspace {
    flex: 1;
    min-height: 0;
    padding: 28px 294px 0;
    overflow: hidden;
}
.page {
    height: 100%;
    padding-top: 118px;
    background: #fff;
    border: 1px solid #c6c6c6;
    border-bottom: none;
}
.margin-corner {
    width: 40px;
    height: 39px;
    margin-left: 157px;
    border-right: 1px solid #aaa;
    border-bottom: 1px solid #aaa;
}
.page p {
    margin: 0 0 0 197px;
    font-size: 21px;
    line-height: 34px;
    color: #000;
    white-space: nowrap;
}
.page mark {
    display: inline-block;
    background: #c6c6c6;
    color: #000;
}
.pilcrow {
    margin-left: 8px;
    font-family: "DejaVu Sans", sans-serif;
    font-size: 11px;
    color: #777;
}

/* status bar */
.statusbar {
    display: flex;
    align-items: center;
    height: 33px;
    padding: 0 8px 4px 7px;
    background: #f3f3f3;
    border-top: 1px solid #c6c6c6;
    color: #444;
}
.statusbar > span {
    margin-right: 24px;
}
.statusbar > svg {
    margin-right: 20px;
}
.view-tools {
    display: flex;
    align-items: center;
    margin-left: auto;
}
.view-tools button {
    display: flex;
    align-items: center;
    justify-content: center;
    width: 45px;
    height: 32px;
    margin-bottom: -4px;
}
.view-tools .on {
    background: #c8c8c8;
}
.zoom-sign {
    width: 20px;
    font-size: 22px;
    font-weight: bold;
    line-height: 24px;
    text-align: center;
    color: #666;
}
.zoom-range {
    appearance: none;
    width: 150px;
    height: 24px;
    margin: 0 2px;
    background: linear-gradient(#aaa, #aaa) center / 100% 2px no-repeat;
}
.zoom-range::-webkit-slider-thumb {
    appearance: none;
    width: 8px;
    height: 18px;
    background: #666;
}
.zoom-value {
    width: 57px;
    text-align: right;
}

/* taskbar */
.taskbar {
    position: relative;
    display: flex;
    height: 60px;
    background: #050c15;
    color: #fff;
}
.taskbar a {
    display: flex;
    align-items: center;
    justify-content: center;
}
.system {
    display: grid;
    grid-template-columns: repeat(3, 1fr);
    width: 216px;
    margin-right: 4px;
}
.apps {
    display: grid;
    grid-template-columns: repeat(15, 1fr);
    width: 1119px;
}
.taskbar .running {
    margin: 0 7px;
    padding-top: 3px;
    border-bottom: 3px solid #76b9ed;
}
.logo-iqiyi {
    font: bold 12px "Liberation Sans", sans-serif;
    fill: #fff;
}
.logo-r {
    font: bold 27px "Liberation Sans", sans-serif;
    fill: #2267c0;
}
.logo-office {
    font: bold 14px "Noto Sans", sans-serif;
    fill: #fff;
}
.tray {
    display: flex;
    margin-left: auto;
}
.tray a {
    width: 36px;
}
.tray .people {
    width: 48px;
    margin-right: 12px;
}
.tray .ime {
    font-size: 20px;
}
.tray .sogou {
    width: 46px;
}
.tray .clock {
    flex-direction: column;
    width: 124px;
    padding-top: 2px;
    font-size: 18px;
    line-height: 28px;
}
.tray .notify {
    width: 52px;
}
.tray .peek {
    width: 8px;
    margin-left: 16px;
    border-left: 1px solid #666;
}
.watermark {
    position: absolute;
    right: 9px;
    bottom: 8px;
    font: 16px/20px "Liberation Sans", sans-serif;
    color: rgba(255, 255, 255, 0.65);
}

.speed-ball {
    position: absolute;
    top: 413px;
    right: -44px;
    width: 73px;
    height: 73px;
    padding-left: 6px;
    border: 3px solid #eee;
    border-radius: 50%;
    background: linear-gradient(#8fe39a, #3fc95a 40%, #45cc60);
    box-shadow: inset 0 0 0 1px #17864f, 0 0 0 1px #aaa, 0 6px 12px rgba(0, 0, 0, 0.4);
    font: bold 15px/66px "DejaVu Sans", sans-serif;
    color: #fff;
}

/* find and replace dialog */
.dialog {
    position: absolute;
    top: 147px;
    left: 943px;
    right: 57px;
    background: #f0f0f0;
    border: 1px solid #1883d7;
    box-shadow: 0 6px 24px rgba(0, 0, 0, 0.4);
    color: #000;
    line-height: 24px;
}
.dialog-title {
    display: flex;
    align-items: center;
    height: 44px;
    padding: 0 0 2px 11px;
    background: #fff;
}
.dialog-title h1 {
    flex: 1;
    margin: 0;
    font-size: 18px;
    font-weight: normal;
}
.dialog-title button {
    display: flex;
    justify-content: center;
    width: 70px;
}
.dialog-body {
    padding: 12px 12px 14px 10px;
}
.dialog-tabs {
    display: flex;
    align-items: flex-end;
}
.dialog-tabs button {
    width: 89px;
    height: 36px;
    padding-right: 3px;
    border: 1px solid #dcdcdc;
    border-left: none;
    border-bottom: none;
}
.dialog-tabs .active {
    position: relative;
    width: 94px;
    height: 39px;
    margin-bottom: -1px;
    padding-bottom: 2px;
    border-left: 1px solid #dcdcdc;
    background: #fff;
}
.panel {
    padding: 17px 12px 25px 14px;
    background: #fff;
    border: 1px solid #dcdcdc;
}
.field {
    display: flex;
    align-items: center;
}
.field label, .field-name {
    width: 118px;
}
.find-box {
    flex: 1;
    display: flex;
    height: 36px;
    padding: 1px;
    border: 1px solid #a6a8ab;
}
.find-box input {
    flex: 1;
    padding: 0 2px 5px;
    font-size: 19px;
}
.find-box button, .select-box span {
    display: flex;
    align-items: center;
    justify-content: center;
    width: 27px;
    background: #e1e1e1;
    border: 1px solid #adadad;
}
.options {
    height: 37px;
}
.actions {
    display: flex;
    gap: 16px;
    margin-top: 149px;
}
.actions button, .format-row button {
    display: flex;
    align-items: center;
    justify-content: center;
    height: 41px;
    background: #e1e1e1;
    border: 1px solid #adadad;
}
.actions .caret, .format-row .caret {
    margin-left: 6px;
}
.actions .less {
    width: 126px;
    margin-right: auto;
}
.actions .reading {
    width: 177px;
}
.actions .next {
    width: 141px;
}
.actions .cancel {
    width: 125px;
}
.find-in {
    position: relative;
}
.actions .pressed {
    width: 187px;
    background: #cce4f7;
    border-color: #005499;
}
.dialog .caret {
    background: #000;
}
.menu {
    position: absolute;
    top: 41px;
    left: -1px;
    width: 235px;
    padding: 1px;
    background: #fff;
    border: 1px solid #c6c6c6;
}
.actions .menu button {
    justify-content: flex-start;
    width: 100%;
    height: 35px;
    padding: 0 0 2px 46px;
    background: none;
    border: 1px solid transparent;
    color: #666;
}
.actions .menu .hover {
    background: #d5e1f2;
    border-color: #a3bde3;
    color: #444;
}
.panel h2 {
    display: flex;
    align-items: center;
    gap: 5px;
    margin: 7px 0 0;
    font-size: 18px;
    font-weight: normal;
}
.panel h2::after {
    content: "";
    flex: 1;
    height: 1px;
    background: #dcdcdc;
}
.direction {
    display: flex;
    align-items: center;
    gap: 14px;
    margin: 12px 0 3px;
    padding-left: 15px;
}
.select-box {
    display: flex;
    width: 111px;
    height: 39px;
    padding: 1px;
    border: 1px solid #a6a8ab;
}
.select-box select {
    flex: 1;
    padding-left: 4px;
    appearance: none;
}
.checks {
    display: grid;
    grid-template-columns: 1fr 247px;
    padding-left: 15px;
}
.checks label {
    display: flex;
    align-items: center;
    height: 36px;
}
.checks input {
    appearance: none;
    display: flex;
    align-items: center;
    justify-content: center;
    width: 20px;
    height: 20px;
    margin-right: 6px;
    border: 1px solid #333;
    background: #fff;
}
.checks input:checked::after {
    content: "";
    width: 13px;
    height: 7px;
    margin-top: -4px;
    border-left: 2px solid #333;
    border-bottom: 2px solid #333;
    transform: rotate(-45deg);
}
.panel .find-heading {
    margin-top: 96px;
}
.format-row {
    display: flex;
    gap: 16px;
    margin-top: 13px;
    padding-left: 15px;
}
.format {
    width: 124px;
}
.special {
    width: 139px;
}
.no-format {
    width: 142px;
}
.format-row .no-format {
    color: #838383;
}
```
